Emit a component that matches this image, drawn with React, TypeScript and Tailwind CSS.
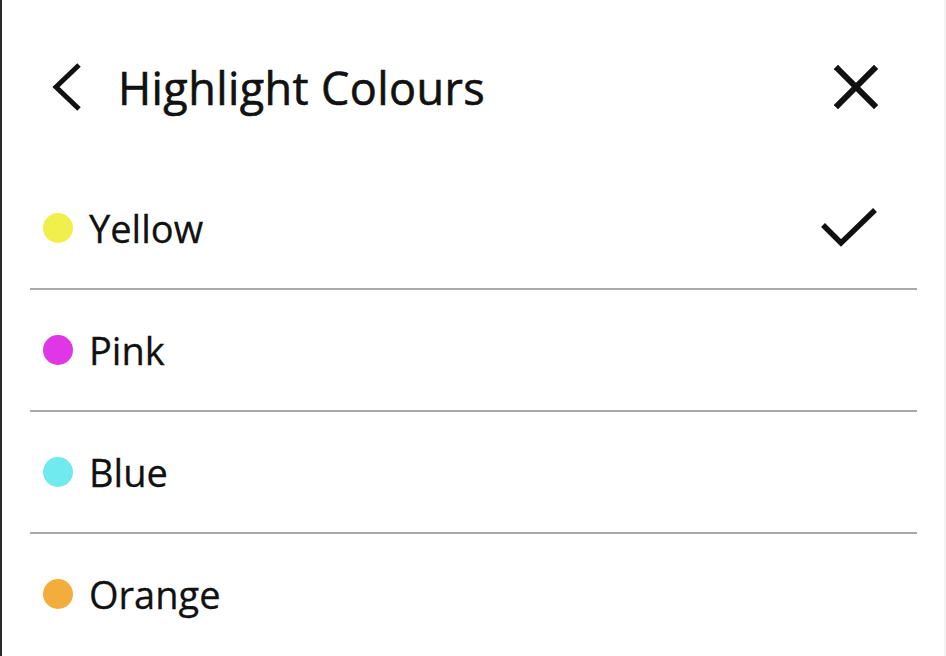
import React from 'react';

const colours = [
  { name: 'Yellow', dot: 'bg-[#f0ef4c]', selected: true },
  { name: 'Pink', dot: 'bg-[#df37e6]', selected: false },
  { name: 'Blue', dot: 'bg-[#70eaee]', selected: false },
  { name: 'Orange', dot: 'bg-[#f2ad3c]', selected: false },
];

const App: React.FC = () => {
  return (
    <div
      className="w-[946px] h-[656px] bg-white border-l-2 border-l-[#2a2a2a] border-r-2 border-r-[#f3f3f3] overflow-hidden text-[#111]"
      style={{ fontFamily: '"Open Sans", "Noto Sans", sans-serif' }}
    >
      {/* header */}
      <div className="h-[168px] pt-[63px]">
        <div className="flex items-center h-[48px]">
          <svg width="30" height="48" viewBox="0 0 30 48" className="ml-[50px] shrink-0">
            <polyline points="27,2 4,24 27,46" fill="none" stroke="#111" strokeWidth="5" />
          </svg>
          <h1 className="ml-[36px] text-[45px] leading-none font-normal tracking-[0.4px] [-webkit-text-stroke:0.6px_#111]">
            Highlight Colours
          </h1>
          <svg width="44" height="44" viewBox="0 0 44 44" className="ml-auto mr-[66px] shrink-0">
            <line x1="4" y1="4" x2="40" y2="40" stroke="#111" strokeWidth="6" strokeLinecap="square" />
            <line x1="40" y1="4" x2="4" y2="40" stroke="#111" strokeWidth="6" strokeLinecap="square" />
          </svg>
        </div>
      </div>

      {/* list */}
      <div>
        {colours.map((c, i) => (
          <div key={c.name}>
            <div className="h-[120px] flex items-center">
              <span className={`ml-[41px] w-[30px] h-[30px] rounded-full shrink-0 ${c.dot}`} />
              <span className="ml-[16px] text-[38px] leading-none [-webkit-text-stroke:0.3px_#111]">{c.name}</span>
              {c.selected && (
                <svg width="58" height="44" viewBox="0 0 58 44" className="ml-auto mr-[66px] shrink-0">
                  <polyline points="3,19 21,37 55,4" fill="none" stroke="#111" strokeWidth="5.5" />
                </svg>
              )}
            </div>
            {i < colours.length - 1 && <div className="h-[2px] bg-[#a9a9a9] ml-[28px] w-[887px]" />}
          </div>
        ))}
      </div>
    </div>
  );
};

export default App;
